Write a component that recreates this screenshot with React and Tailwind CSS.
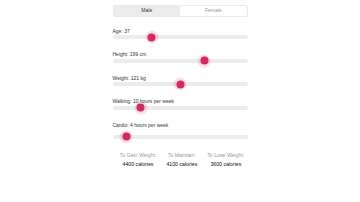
import { useState } from "react";

const SLIDERS = [
  { key: "age", label: "Age: 37", pct: 29 },
  { key: "height", label: "Height: 199 cm", pct: 68 },
  { key: "weight", label: "Weight: 121 kg", pct: 50 },
  { key: "walking", label: "Walking: 10 hours per week", pct: 21 },
  { key: "cardio", label: "Cardio: 4 hours per week", pct: 10, gap: true },
];

const RESULTS = [
  { title: "To Gain Weight:", value: "4400 calories" },
  { title: "To Maintain:", value: "4100 calories" },
  { title: "To Lose Weight:", value: "3600 calories" },
];

function Slider({ label, pct, gap }) {
  return (
    <div className="mb-[12px]">
      <div className="h-[6px] text-[5px] leading-[6px] text-[#333]">{label}</div>
      <div className={`relative h-[4px] rounded-full bg-[#ececec] ${gap ? "mt-[7px]" : "mt-[1.5px]"}`}>
        <span
          className="absolute top-1/2 w-[13px] h-[13px] -translate-x-1/2 -translate-y-1/2 rounded-full bg-[#d81b60]/15 flex items-center justify-center"
          style={{ left: `${pct}%` }}
        >
          <span className="w-[8px] h-[8px] rounded-full bg-[#d42a5f]" />
        </span>
      </div>
    </div>
  );
}

export default function App() {
  const [sex, setSex] = useState("male");
  return (
    <div className="w-[360px] h-[202px] bg-white" style={{ fontFamily: '"Liberation Sans", Arial, sans-serif' }}>
      <div className="w-[135px] mx-auto pt-[5px]">
        {/* Sex toggle */}
        <div className="flex h-[12px] rounded-[2px] border border-[#eaeaea] overflow-hidden text-[5px]">
          <button
            onClick={() => setSex("male")}
            className={`flex-1 flex items-center justify-center ${sex === "male" ? "bg-[#ececec] text-[#333]" : "bg-white text-[#999]"}`}
          >
            Male
          </button>
          <button
            onClick={() => setSex("female")}
            className={`flex-1 flex items-center justify-center ${sex === "female" ? "bg-[#ececec] text-[#333]" : "bg-white text-[#999]"}`}
          >
            Female
          </button>
        </div>

        <div className="mt-[10.5px]">
          {SLIDERS.map(s => (
            <Slider key={s.key} {...s} />
          ))}
        </div>

        {/* Results */}
        <div className="flex justify-center gap-[10px] pl-[4px] mt-[9px] text-[5.2px] leading-[9px] text-center">
          {RESULTS.map(r => (
            <div key={r.title}>
              <div className="text-[#999]">{r.title}</div>
              <div className="text-[#111]">{r.value}</div>
            </div>
          ))}
        </div>
      </div>
    </div>
  );
}
